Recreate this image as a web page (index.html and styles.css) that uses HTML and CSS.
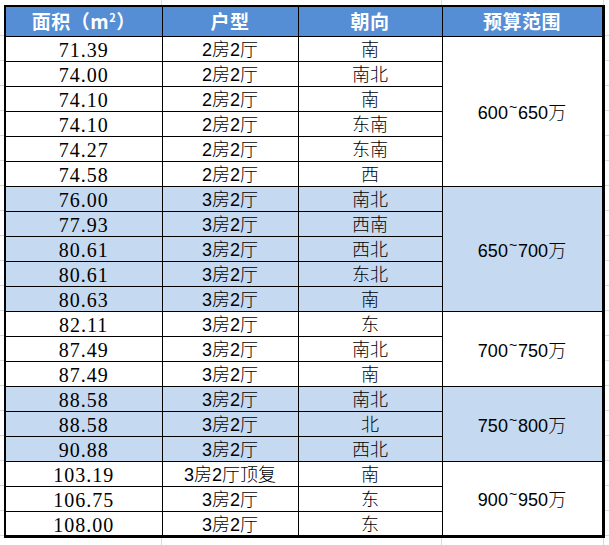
FILE: index.html
```html
<!DOCTYPE html>
<html lang="zh">
<head>
<meta charset="utf-8">
<link rel="stylesheet" href="styles.css">
</head>
<body>
<table class="sheet">
  <colgroup>
    <col class="c1"><col class="c2"><col class="c3"><col class="c4">
  </colgroup>
  <thead>
    <tr class="head">
      <th>面积（m<sup>2</sup>）</th><th>户型</th><th>朝向</th><th>预算范围</th>
    </tr>
  </thead>
  <tbody>
    <tr><td class="num">71.39</td><td class="type">2房2厅</td><td class="dir">南</td><td class="budget" rowspan="6">600<span class="tilde">~</span>650万</td></tr>
    <tr><td class="num">74.00</td><td class="type">2房2厅</td><td class="dir">南北</td></tr>
    <tr><td class="num">74.10</td><td class="type">2房2厅</td><td class="dir">南</td></tr>
    <tr><td class="num">74.10</td><td class="type">2房2厅</td><td class="dir">东南</td></tr>
    <tr><td class="num">74.27</td><td class="type">2房2厅</td><td class="dir">东南</td></tr>
    <tr><td class="num">74.58</td><td class="type">2房2厅</td><td class="dir">西</td></tr>

    <tr class="band"><td class="num">76.00</td><td class="type">3房2厅</td><td class="dir">南北</td><td class="budget" rowspan="5">650<span class="tilde">~</span>700万</td></tr>
    <tr class="band"><td class="num">77.93</td><td class="type">3房2厅</td><td class="dir">西南</td></tr>
    <tr class="band"><td class="num">80.61</td><td class="type">3房2厅</td><td class="dir">西北</td></tr>
    <tr class="band"><td class="num">80.61</td><td class="type">3房2厅</td><td class="dir">东北</td></tr>
    <tr class="band"><td class="num">80.63</td><td class="type">3房2厅</td><td class="dir">南</td></tr>

    <tr><td class="num">82.11</td><td class="type">3房2厅</td><td class="dir">东</td><td class="budget" rowspan="3">700<span class="tilde">~</span>750万</td></tr>
    <tr><td class="num">87.49</td><td class="type">3房2厅</td><td class="dir">南北</td></tr>
    <tr><td class="num">87.49</td><td class="type">3房2厅</td><td class="dir">南</td></tr>

    <tr class="band"><td class="num">88.58</td><td class="type">3房2厅</td><td class="dir">南北</td><td class="budget" rowspan="3">750<span class="tilde">~</span>800万</td></tr>
    <tr class="band"><td class="num">88.58</td><td class="type">3房2厅</td><td class="dir">北</td></tr>
    <tr class="band"><td class="num">90.88</td><td class="type">3房2厅</td><td class="dir">西北</td></tr>

    <tr><td class="num">103.19</td><td class="type">3房2厅顶复</td><td class="dir">南</td><td class="budget" rowspan="3">900<span class="tilde">~</span>950万</td></tr>
    <tr><td class="num">106.75</td><td class="type">3房2厅</td><td class="dir">东</td></tr>
    <tr><td class="num">108.00</td><td class="type">3房2厅</td><td class="dir">东</td></tr>
  </tbody>
</table>
</body>
</html>
```

FILE: styles.css
```css
html, body {
  margin: 0;
  padding: 0;
}

body {
  width: 609px;
  height: 545px;
  box-sizing: border-box;
  padding: 5px 0 0 4px;
  background-color: #ffffff;
  background-image:
    linear-gradient(to right, transparent 161px, #dadada 161px, #dadada 162px, transparent 162px),
    linear-gradient(to right, transparent 441px, #dadada 441px, #dadada 442px, transparent 442px),
    linear-gradient(to right, transparent 603px, #dadada 603px, #dadada 604px, transparent 604px),
    repeating-linear-gradient(to bottom, transparent 0, transparent 24px, #dadada 24px, #dadada 25px);
  background-position: 0 0, 0 0, 0 0, 0 11px;
  font-family: "Noto Sans CJK SC", sans-serif;
  overflow: hidden;
}

.sheet {
  width: 600px;
  border-collapse: collapse;
  table-layout: fixed;
  background: #ffffff;
  border: 2px solid #000;
  border-right-width: 3px;
  border-bottom-width: 3px;
}

.c1 { width: 157px; }
.c2 { width: 136px; }
.c3 { width: 144px; }
.c4 { width: 161px; }

.sheet th,
.sheet td {
  border: 1px solid #000;
  padding: 0;
  text-align: center;
  vertical-align: middle;
  line-height: 20px;
  white-space: nowrap;
}

.head {
  height: 30px;
}

.head th {
  background: #558ed5;
  color: #ffffff;
  font-weight: bold;
  font-size: 19px;
  letter-spacing: 0.5px;
}

.head sup {
  font-size: 11px;
  vertical-align: 7px;
  line-height: 0;
}

.sheet tbody tr {
  height: 25px;
}

.sheet tbody td {
  color: #000;
  padding-top: 3px;
}

.band td {
  background: #c5d9f1;
}

.num {
  font-family: "Liberation Serif", serif;
  font-size: 20px;
  letter-spacing: 1px;
}

.type,
.dir,
.budget {
  font-family: "Liberation Sans", "Noto Sans CJK SC", sans-serif;
  font-size: 18px;
  font-weight: 300;
}

.budget {
  padding-top: 0;
}

.tilde {
  display: inline-block;
  font-size: 14px;
  line-height: 10px;
  vertical-align: 7px;
  margin: 0 1px;
}
```
